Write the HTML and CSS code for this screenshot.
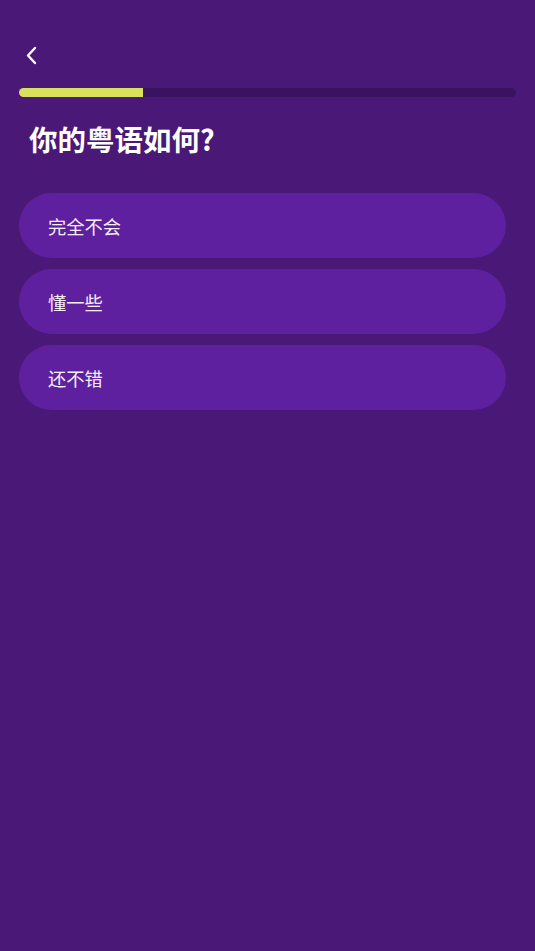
FILE: index.html
```html
<!DOCTYPE html>
<html lang="zh-CN">
<head>
  <meta charset="UTF-8" />
  <meta name="viewport" content="width=device-width, initial-scale=1.0"/>
  <title>粤语水平</title>
  <link rel="stylesheet" href="styles.css">
</head>
<body>
  <div class="screen">
    <button class="back" aria-label="返回">
      <svg width="14" height="19" viewBox="0 0 14 19"><path d="M10 2 L3 9.5 L10 17" fill="none" stroke="#fff" stroke-width="2.4" stroke-linecap="round" stroke-linejoin="round"/></svg>
    </button>
    <div class="progress"><div class="progress-fill"></div></div>
    <h1 class="question">你的粤语如何?</h1>
    <div class="options">
      <button class="option">完全不会</button>
      <button class="option">懂一些</button>
      <button class="option">还不错</button>
    </div>
  </div>
</body>
</html>
```

FILE: styles.css
```css
* { margin: 0; padding: 0; box-sizing: border-box; }
html, body {
  height: 100%;
}
body {
  font-family: "Noto Sans CJK SC", "Noto Sans", sans-serif;
  background: #4a1877;
  color: #fff;
}
.screen {
  padding: 0 19px;
}
.back {
  display: block;
  margin: 46px 0 0 6px;
  background: none;
  border: none;
  cursor: pointer;
  height: 19px;
}
.back svg { display: block; }
.progress {
  margin-top: 23px;
  height: 9px;
  border-radius: 5px;
  background: #3a1360;
  overflow: hidden;
}
.progress-fill {
  width: 25%;
  height: 100%;
  background: #d8e05c;
}
.question {
  margin: 24px 0 0 10px;
  font-size: 28.5px;
  line-height: 36px;
  font-weight: 700;
}
.options {
  display: flex;
  flex-direction: column;
  gap: 11px;
  margin: 36px 10px 0 0;
}
.option {
  height: 65px;
  border: none;
  border-radius: 33px;
  background: #5f209f;
  color: #f6effb;
  font-family: inherit;
  font-size: 18.3px;
  text-align: left;
  padding-left: 29px;
  cursor: pointer;
}
```
